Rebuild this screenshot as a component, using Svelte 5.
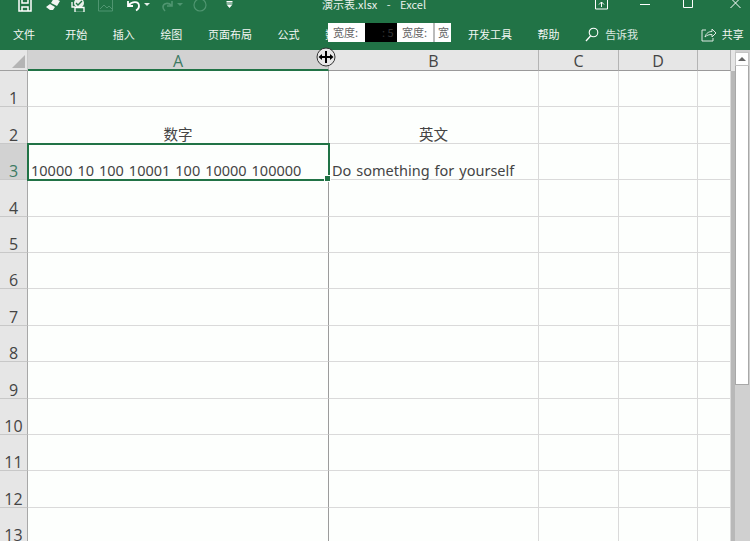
<script>
	const tabs = ['文件', '开始', '插入', '绘图', '页面布局', '公式', '数据', '审阅', '视图', '开发工具', '帮助'];
	const covered = ['审阅', '视图'];
	const columns = ['A', 'B', 'C', 'D', ''];
	const rows = [1, 2, 3, 4, 5, 6, 7, 8, 9, 10, 11, 12, 13];
	const cells = {
		'2A': { text: '数字', center: true },
		'2B': { text: '英文', center: true },
		'3A': { text: '10000 10 100 10001 100 10000 100000' },
		'3B': { text: 'Do something for yourself' }
	};
</script>

<div class="window">
	<div class="ribbon">
		<div class="titlebar">
			<div class="quick">
				<svg class="qa save" viewBox="0 0 14 12"><path d="M1 -2h11l1 1v12H1zM4 -2v5h6v-5M4 11V7h6v4" fill="none" stroke="#fff" stroke-width="1.5"/></svg>
				<svg class="qa brush" viewBox="0 0 16 12"><path d="M9 -2l6 3-3 5-6-3zM5 4l5 3-2 3H5L1 7z" fill="#f2f6f3"/></svg>
				<svg class="qa touch" viewBox="0 0 16 13"><circle cx="8" cy="3" r="5" fill="#e8efe9"/><path d="M5 3l2 2 4-4" fill="none" stroke="#217346" stroke-width="1.4"/><path d="M1 2v5h3M4 7.5h9v5H4z" fill="#217346" stroke="#fff" stroke-width="1.3"/></svg>
				<svg class="qa image" viewBox="0 0 15 12"><path d="M.5 -2h14v13H.5zM2 9l4-4 3 3 2-2 3 3" fill="none" stroke="#4f9570" stroke-width="1"/></svg>
				<svg class="qa undo" viewBox="0 0 15 12"><path d="M2 1v5h5M2.500 5.500C6 1 13 1 13 6c0 2-1 3.500-3 4.500" fill="none" stroke="#fff" stroke-width="1.800"/></svg>
				<span class="drop"></span>
				<svg class="qa redo" viewBox="0 0 13 12"><path d="M11 1v5H6M10.500 5.500C7.500 2 2 3 2 7c0 2 1 3 2 4" fill="none" stroke="#4f9570" stroke-width="1.600"/></svg>
				<span class="drop dim"></span>
				<svg class="qa circle" viewBox="0 0 14 14"><circle cx="7" cy="7" r="6" fill="none" stroke="#4f9570" stroke-width="1.200"/></svg>
				<svg class="qa more" viewBox="0 0 7 7"><path d="M.5 .5h6M.5 2h6" stroke="#fff"/><path d="M.5 3.500h6L3.500 7z" fill="#fff"/></svg>
			</div>
			<div class="doc-title">演示表.xlsx&nbsp;&nbsp; -&nbsp;&nbsp; Excel</div>
			<div class="controls">
				<svg class="ctl display" viewBox="0 0 13 10"><path d="M.5 -2h12v11H.5zM6.500 7V2M4 4.500l2.500-2.500L9 4.500" fill="none" stroke="#fff"/></svg>
				<span class="ctl minimize"></span>
				<svg class="ctl restore" viewBox="0 0 10 8"><path d="M.5 -2h9v9.500h-9z" fill="none" stroke="#fff"/></svg>
				<svg class="ctl close" viewBox="0 0 11 8"><path d="M.5 -2l10 10M10.500 -2L.5 8" stroke="#fff" fill="none"/></svg>
			</div>
		</div>
		<div class="tabs">
			{#each tabs as tab}
				<span class="tab" class:covered={covered.includes(tab)}>{tab}</span>
			{/each}
			<span class="search">
				<svg viewBox="0 0 14 15" width="14" height="15"><circle cx="8.500" cy="5.500" r="4.300" fill="none" stroke="#fff" stroke-width="1.100"/><path d="M5.500 9L1 14" stroke="#fff" stroke-width="1.300"/></svg>
				<span>告诉我</span>
			</span>
			<span class="share">
				<svg viewBox="0 0 16 15" width="16" height="15"><path d="M5 3H1v11h11v-3" fill="none" stroke="#dfeae3" stroke-width="1"/><path d="M4 10c1-4 4-5.500 7-5.500V2l4 4-4 4V7.500C8 7.500 6 8 4 10z" fill="none" stroke="#dfeae3" stroke-width="1"/></svg>
				<span>共享</span>
			</span>
		</div>
		<div class="size-strip">
			<span class="chip">宽度:</span>
			<span class="chip black">: 5</span>
			<span class="chip boxed">宽度:</span>
			<span class="chip cut">宽</span>
		</div>
	</div>

	<div class="content">
		<div class="sheet">
			<div class="corner"><span></span></div>
			{#each columns as col}
				<div class="colhead" class:active={col === 'A'}>{col}</div>
			{/each}
			{#each rows as row}
				<div class="rowhead" class:active={row === 3}>{row}</div>
				{#each columns as col}
					{@const cell = cells[row + col]}
					<div class="cell" class:center={cell?.center} class:wide={col === 'A'} class:selected={row === 3 && col === 'A'}>
						{cell ? cell.text : ''}
					</div>
				{/each}
			{/each}
		</div>
		<div class="gutter"></div>
		<div class="scrollbar">
			<div class="arrow"><span></span></div>
			<div class="thumb"></div>
		</div>
	</div>

	<svg class="cursor" viewBox="0 0 20 20" width="20" height="20">
		<circle cx="10" cy="10" r="9" fill="#e8e8e8" stroke="#333" stroke-width="1"/>
		<path d="M9 4h2v12H9z" fill="#000"/>
		<path d="M2.500 10l3.500-3v2h8V7l3.500 3-3.500 3v-2H6v2z" fill="#000"/>
	</svg>
</div>

<style>
	:global(body) {
		margin: 0;
	}

	.window {
		position: relative;
		width: 750px;
		height: 541px;
		overflow: hidden;
		background: #fdfffd;
		font-family: "Noto Sans CJK SC", "Noto Sans", sans-serif;
	}

	.ribbon {
		position: relative;
		height: 50px;
		background: #217346;
		color: #fff;
	}

	.titlebar {
		display: flex;
		height: 12px;
		overflow: hidden;
	}

	.quick {
		display: flex;
		align-items: flex-start;
		width: 322px;
		padding-left: 18px;
		box-sizing: border-box;
	}

	.qa {
		display: block;
		flex-shrink: 0;
	}

	.save { width: 14px; height: 12px; margin-right: 13px; }
	.brush { width: 16px; height: 12px; margin-right: 10px; }
	.touch { width: 16px; height: 13px; margin-right: 11px; }
	.image { width: 15px; height: 12px; margin-right: 13px; }
	.undo { width: 15px; height: 12px; margin-right: 3px; }
	.redo { width: 13px; height: 12px; margin-right: 3px; margin-left: 11px; }
	.circle { width: 14px; height: 14px; margin-left: 10px; margin-top: -2px; margin-right: 19px; }
	.more { width: 7px; height: 7px; margin-top: 1px; }

	.drop {
		width: 0;
		height: 0;
		margin-top: 3px;
		border: 3px solid transparent;
		border-top: 3px solid #e6efe9;
		border-bottom: 0;
	}

	.drop.dim {
		border-top-color: #4f9570;
	}

	.doc-title {
		width: 273px;
		font-size: 11px;
		line-height: 8px;
		word-spacing: 0.7px;
		white-space: nowrap;
		color: #e9f1ec;
	}

	.controls {
		display: flex;
		align-items: flex-start;
	}

	.ctl {
		display: block;
		flex-shrink: 0;
	}

	.display { width: 13px; height: 10px; }
	.minimize { width: 10px; height: 1px; margin: 4px 0 0 32px; background: #fff; }
	.restore { width: 10px; height: 8px; margin-left: 33px; }
	.close { width: 11px; height: 8px; margin-left: 37px; }

	.tabs {
		display: flex;
		align-items: center;
		height: 22px;
		margin-top: 11px;
		padding-left: 13px;
		gap: 25.6px;
		font-size: 11px;
		line-height: 22px;
		white-space: nowrap;
	}

	.tab {
		flex: none;
		color: #f3f7f4;
	}

	.tab:first-child {
		margin-right: 4.6px;
	}

	.tab.covered {
		visibility: hidden;
	}

	.search {
		display: flex;
		flex: none;
		align-items: center;
		gap: 6px;
		color: #dbe8e0;
	}

	.share {
		display: flex;
		flex: none;
		align-items: center;
		gap: 5px;
		margin-left: 37px;
		color: #f3f7f4;
	}

	.size-strip {
		position: absolute;
		left: 328px;
		top: 23px;
		display: flex;
		height: 19px;
		font-size: 11px;
		line-height: 19px;
		color: #666;
	}

	.chip {
		width: 37px;
		padding-left: 5px;
		box-sizing: border-box;
		background: #fff;
		white-space: nowrap;
		overflow: hidden;
	}

	.chip.black {
		width: 32px;
		padding-left: 17px;
		background: #000;
		color: #333;
	}

	.chip.boxed {
		width: 38px;
		border-right: 2px solid #bbb;
	}

	.chip.cut {
		width: 16px;
		padding-left: 3px;
	}

	.content {
		display: flex;
		height: 491px;
	}

	.sheet {
		display: grid;
		flex: none;
		width: 731px;
		grid-template-columns: 28px 301px 210px 80px 79px 33px;
		grid-template-rows: 21px repeat(13, 36.4px);
		overflow: hidden;
		background: #fdfffd;
		color: #444;
	}

	.corner {
		background: #e6e6e6;
		border-bottom: 1px solid #a0a0a0;
		box-sizing: border-box;
		border-right: 1px solid #c8c8c8;
	}

	.corner span {
		display: block;
		width: 0;
		height: 0;
		margin: 5px 0 0 12px;
		border-left: 13px solid transparent;
		border-bottom: 13px solid #b4b4b4;
	}

	.colhead {
		box-sizing: border-box;
		background: #e6e6e6;
		border-right: 1px solid #b4b4b4;
		border-bottom: 1px solid #9a9a9a;
		font-family: "Open Sans", sans-serif;
		font-size: 16px;
		line-height: 23px;
		text-align: center;
		color: #444;
	}

	.colhead.active {
		background: #d2d2d2;
		border-bottom: 2px solid #217346;
		color: #3d7a63;
	}

	.colhead:last-of-type {
		border-right: 0;
	}

	.rowhead {
		display: flex;
		align-items: flex-end;
		justify-content: center;
		box-sizing: border-box;
		background: #e6e6e6;
		border-right: 1px solid #a8a8a8;
		border-bottom: 1px solid #c8c8c8;
		font-family: "Open Sans", sans-serif;
		font-size: 16px;
		line-height: 16px;
		color: #444;
	}

	.rowhead.active {
		background: #d2d2d2;
		color: #3d7a63;
	}

	.cell {
		position: relative;
		display: flex;
		align-items: flex-end;
		box-sizing: border-box;
		padding-left: 3px;
		border-right: 1px solid #dadada;
		border-bottom: 1px solid #dadada;
		font-family: "Noto Sans", "Noto Sans CJK SC", sans-serif;
		font-size: 14.5px;
		word-spacing: 1.2px;
		line-height: 17px;
		white-space: nowrap;
	}

	.cell.wide {
		border-right-color: #9c9c9c;
	}

	.cell.center {
		justify-content: center;
		padding-left: 0;
		line-height: 18px;
	}

	.cell.selected {
		outline: 2px solid #217346;
		outline-offset: -1px;
		z-index: 1;
	}

	.cell.selected::after {
		content: "";
		position: absolute;
		right: -3px;
		bottom: -3px;
		width: 5px;
		height: 5px;
		background: #217346;
		border: 1px solid #fdfffd;
	}

	.gutter {
		flex: none;
		width: 4px;
		background: linear-gradient(#e6e6e6 21px, #b8b8b8 21px);
	}

	.scrollbar {
		flex: none;
		width: 15px;
		background: #d0d0d0;
		padding-top: 2px;
		box-sizing: border-box;
	}

	.arrow {
		display: flex;
		align-items: center;
		justify-content: center;
		height: 14px;
		width: 14px;
		background: #fff;
		border: 1px solid #c4c4c4;
		box-sizing: border-box;
	}

	.arrow span {
		width: 0;
		height: 0;
		border-left: 4px solid transparent;
		border-right: 4px solid transparent;
		border-bottom: 4px solid #666;
	}

	.thumb {
		width: 14px;
		height: 319px;
		box-sizing: border-box;
		background: #fff;
		border: 1px solid #a8a8a8;
		border-top: 0;
	}

	.cursor {
		position: absolute;
		left: 316px;
		top: 47px;
	}
</style>
